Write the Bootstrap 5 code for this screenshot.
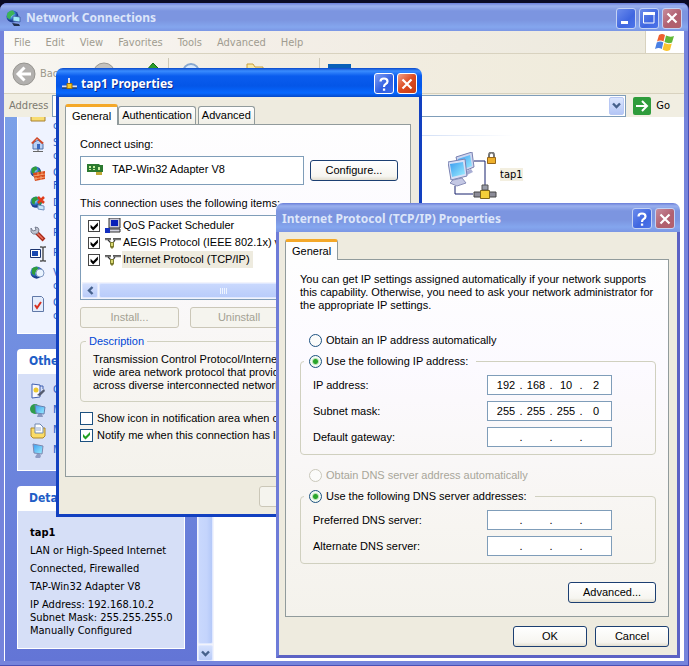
<!DOCTYPE html>
<html lang="en">
<head>
<meta charset="utf-8">
<meta name="viewport" content="width=device-width, initial-scale=1">
<title>Network Connections</title>
<link href="https://cdn.jsdelivr.net/npm/bootstrap@5.3.0/dist/css/bootstrap.min.css" rel="stylesheet">
<style>
:root{--dlg:"Liberation Sans",Arial,sans-serif;--ui:"DejaVu Sans Condensed","DejaVu Sans",sans-serif;--cap:"Noto Sans","Open Sans",sans-serif}
html,body{height:100%}
body{background:#0a0a24;font:11px/13px var(--ui);color:#000;overflow:hidden;position:relative}
p{margin:0}
button,input{font:inherit;color:inherit}
svg{display:block;flex:none}
a{color:#215dc6;text-decoration:none}
.win{display:flex;flex-direction:column;border-radius:7px 7px 0 0;overflow:hidden}
.caption{height:28px;flex:none;padding:2px 6px 0;font:bold 12px/18px var(--cap);color:#d8e4f8}
.win-main{height:calc(100% - 3px);margin-top:3px;background:#7584dc;border-right:1px solid #4a50b4;border-bottom:1px solid #4a50b4}
.idle .caption{background:linear-gradient(#6a7ed8 0,#9ab0ee 3px,#7c95e0 8px,#7c95e0 17px,#84a6ee 24px,#7b96e4)}
.idle .caption{color:#dce6fa}
.main-inner{flex:1;min-height:0;margin:0 4px 4px;background:#f3f0e8;display:flex;flex-direction:column}
.cbtns{display:flex;gap:3px}
.cbtn{width:20px;height:21px;padding:0;border:1px solid #fff;border-radius:3px;background:linear-gradient(135deg,#7c9cf4,#2f5de0 60%,#3c6cec);display:flex;align-items:center;justify-content:center}
.cbtn-x{background:linear-gradient(135deg,#f0a088,#dc4a20 50%,#c83c14)}
.idle .cbtn{border-color:#c4d2f4;background:linear-gradient(135deg,#6c8cec,#3f66e0 60%,#4c74ea)}
.idle .cbtn-x{background:linear-gradient(135deg,#c88c9c,#b06070 55%,#b4606c)}
.menubar{height:23px;flex:none;background:linear-gradient(90deg,#fbfaf8,#f4efe8 35%,#ece9dc);border-bottom:1px solid #d8d2bf}
.menus{gap:15px;padding-left:10px}
.menubar a{color:#a09c90}
.logo-cell{width:39px;background:#fff;border-left:1px solid #d8d2bf}
.toolbar{height:40px;flex:none;background:linear-gradient(90deg,#f8f6f2,#f3eee4 35%,#efebda);border-bottom:1px solid #d8d2bf;color:#9c988c}
.toolbar button{border:0;background:none;padding:0}
.vsep{width:1px;height:32px;background:#cdc8b6}
.address{height:23px;flex:none;background:#f1eee2;color:#7d7a70;padding-left:5px}
.addr-box{border:1px solid #7f9db9;background:#fff;height:22px;padding:1px}
.addr-box input{border:0;min-width:0;outline:0;background:none}
.drop{width:15px;border:1px solid #b8c8f4;border-radius:2px;background:linear-gradient(#dce6fe,#b4c6f6);padding:0;display:flex;align-items:center;justify-content:center}
.go{border:0;background:none;padding:0 14px 0 7px;gap:5px;color:#000}
.pane{width:193px;flex:none;background:linear-gradient(#7ba0e8,#6375d6);border-left:1px solid #fff;display:flex;flex-direction:column;justify-content:flex-end;gap:15px;padding:0 12px 12px;overflow:hidden}
.task{flex:none;color:#000}
.task h2{height:25px;margin:0;padding:0 12px;border-radius:4px 4px 0 0;background:linear-gradient(90deg,#fff 35%,#c6d3f7);font:bold 12px/25px var(--ui);color:#215dc6}
.task-in{background:#d6dff7;border:1px solid #fff;border-top:0;padding:9px 6px 11px 12px}
.task ul{list-style:none;margin:0;padding:0;display:flex;flex-direction:column;gap:4px}
.task li{display:flex;gap:7px;min-height:16px;align-items:flex-start}
.task-top .task-in{background:#eff3ff}
.task-info{display:flex;flex-direction:column;gap:5px;padding-top:15px;white-space:nowrap}
.vscroll{width:17px;flex:none;background:#f2f3fb;display:flex;flex-direction:column;gap:1px;padding:0 1px}
.thumb{background:linear-gradient(90deg,#c9d8fd,#c4d4fc 60%,#b4c8f8);border:1px solid #dfe8ff;border-radius:2px}
.sbtn{height:16px;border:1px solid #dfe8ff;border-radius:2px;background:linear-gradient(#d4e0fd,#b9cbf8);padding:0;display:flex;align-items:center;justify-content:center}
.files{flex:1;background:#fff;padding:18px 0 0}
.rule{height:1px;width:300px;background:linear-gradient(90deg,#7098e0,#fff)}
.file{margin:16px 0 0 234px;display:flex;align-items:center;gap:3px;color:#000}
.file span{background:#f3efe0;margin-bottom:5px}
.dlg{position:absolute;font:11px/13px var(--dlg)}
.dlg .caption{height:29px;padding-right:5px}
.dlg-body{background:#eeebdf;border:3px solid #1240c0;border-top:0;padding:7px 8px 7px 6px}
.dlg-a{left:56px;top:68px;width:366px}
.dlg-a .caption{color:#fff;text-shadow:1px 1px #0a2a90;background:linear-gradient(#0a48c8 0,#3a8cff 3px,#0a5cee 8px,#0456e8 18px,#0668ff 25px,#0448c8)}
.dlg-b{left:276px;top:203px;width:404px}
.dlg-b .dlg-body{border-color:#6e7cd8 #5c62c4 #5c62c4 #6e7cd8;padding-bottom:8px}
.tabs{display:flex;align-items:flex-end;height:20px}
.tabs button{border:1px solid #919b9c;border-bottom:0;border-radius:3px 3px 0 0;background:linear-gradient(#fff,#f0efe6);padding:0 3px;height:18px;margin-right:2px}
.tabs .on{height:21px;margin:0 0 -1px;padding:0 6px;border-top:3px solid #f4a828;background:#fdfdfc;position:relative;z-index:1;line-height:14px}
.page{border:1px solid #919b9c;background:linear-gradient(#fefefe,#fcfaff 30%,#f7f5f1 75%,#f4f2ec);padding:13px 12px 13px 14px;display:flex;flex-direction:column}
.page-a{padding-bottom:32px}
.s1{margin-top:5px}
.s2{margin-top:7px}
.s3{margin-top:12px}
.s4{margin-top:20px}
.s5{margin-top:18px}
.xbtn{height:21px;border:1px solid #1c3f72;border-radius:3px;background:linear-gradient(#fff,#f6f5f0 80%,#e2ded0);padding:0;min-width:74px}
.xbtn-l{min-width:88px}
.xbtn-w{width:99px}
.xbtn:disabled{border-color:#cbc7b8;background:#f5f4ee;color:#a3a193}
.btnbar{margin-top:9px}
.field{border:1px solid #7f9db9;background:#fff}
.adapter{height:29px;width:224px;padding:0 6px 3px}
.items{height:85px;padding:1px 1px 0}
.irow{height:17px;padding-left:6px;display:flex;align-items:center;gap:5px}
.irow label{display:flex;align-items:center;gap:1px}
.irow label span{padding:2px 3px 2px 1px}
.irow .sel{background:#eeebdf}
.form-check-input.tick{float:none;margin:0;width:13px;height:13px;border:1px solid #1c5180;border-radius:0;background-color:#fff;background-size:11px 11px;flex:none;opacity:1;box-shadow:none}
.form-check-input.tick:checked{background-color:#fff;border-color:#1c5180;background-image:url("data:image/svg+xml,%3Csvg xmlns='http://www.w3.org/2000/svg' viewBox='0 0 11 11'%3E%3Cpath d='M2 4v3l2.500 2.500L9 5V2L4.500 6.500z' fill='%2321a121'/%3E%3C/svg%3E")}
.irow .form-check-input.tick{width:12px;height:12px;border-color:#444}
.irow .form-check-input.tick:checked{border-color:#444;background-image:url("data:image/svg+xml,%3Csvg xmlns='http://www.w3.org/2000/svg' viewBox='0 0 11 11'%3E%3Cpath d='M2 4v3l2.500 2.500L9 5V2L4.500 6.500z' fill='%23000'/%3E%3C/svg%3E")}
.form-check-input.dot{float:none;margin:0;width:13px;height:13px;border:1px solid #1c5180;background-color:#fbfbfa;flex:none;box-shadow:none}
.form-check-input.dot:checked{background-color:#f4fbf2;border-color:#1c5180;background-image:radial-gradient(circle,#2aa52a 0,#2aa52a 2px,#b8e4b4 3px,transparent 4px)}
.form-check-input.dot:disabled{border-color:#cac8bb;opacity:1}
.form-check-input.dot:disabled~label{color:#a8a69a;opacity:1}
.orow{display:flex;align-items:center;gap:4px;height:17px}
.oradio{padding-left:9px}
.hscroll{height:17px;display:flex;gap:1px;background:#f2f3fb;padding:1px 0}
.hscroll .sbtn{width:16px;height:15px}
.hscroll .thumb{flex:1;background:linear-gradient(#c9d8fd,#b9ccfa)}
.grp{border:1px solid #d0d0bf;border-radius:4px;margin:0;padding:0 12px 7px;min-width:0}
.grp legend{float:none;width:auto;font:inherit;line-height:13px}
.grp .desc{color:#0046d5;margin:0 0 5px -7px;padding:0 3px}
.grp-a{margin:7px 0 8px;padding-bottom:9px}
.iprow{display:flex;align-items:center;justify-content:space-between;margin-bottom:6px}
.iprow:last-child{margin-bottom:0}
.ip{display:flex;width:125px;height:20px;padding-left:5px;align-items:center;margin-right:31px}
.ip input{width:26px;border:0;padding:0;text-align:center;background:none;outline:0}
.ip i{width:4px;font-style:normal;text-align:center}
.nw{white-space:nowrap}
.tcp{margin-top:4px}
.tcp legend{margin:0 0 5px -9px;padding:0 8px 0 5px}
</style>
<script src="https://cdn.jsdelivr.net/npm/bootstrap@5.3.0/dist/js/bootstrap.bundle.min.js"></script>
</head>
<body>
<svg width="0" height="0" class="position-absolute" aria-hidden="true">
<defs>
<linearGradient id="scr" x1="0" y1="0" x2="1" y2="1"><stop offset="0" stop-color="#3c9cf0"/><stop offset="1" stop-color="#9ef0ff"/></linearGradient>
<radialGradient id="globe" cx=".4" cy=".35"><stop offset="0" stop-color="#bfeaff"/><stop offset=".6" stop-color="#3a86d8"/><stop offset="1" stop-color="#1c3f90"/></radialGradient>
<symbol id="i-globe" viewBox="0 0 16 16"><circle cx="7" cy="7" r="6.500" fill="url(#globe)"/><path d="M2 3q3-3 6-2l1 3-3 2-1 4-3-2zM10 6l3-1v4l-3 2z" fill="#2e9c3c"/></symbol>
<symbol id="i-pc" viewBox="0 0 16 16"><path d="M3 1l10 2-1 8-8-1z" fill="url(#scr)" stroke="#7d88b0"/><path d="M7 11h3l1 2-1 2H6l-1-1z" fill="#8f9cc4"/></symbol>
<symbol id="i-wire" viewBox="0 0 16 16"><path d="M0 4.500h6M8 4.500h8" stroke="#777" stroke-width="1.500"/><path d="M0 3.500h6M8 3.500h8" stroke="#222" stroke-width=".7"/><path d="M3 5l3 3M10 5L8 8" stroke="#333" fill="none" stroke-width="1.200"/><path d="M5 7h4v5l-2 2-2-2z" fill="#7c7c30"/><path d="M6 8h2v3H6z" fill="#d8d870"/></symbol>
<symbol id="i-x" viewBox="0 0 12 12"><path d="M1.500 1.500l9 9m0-9l-9 9" stroke="#fff" stroke-width="2.200"/></symbol>
<symbol id="i-q" viewBox="0 0 12 14"><path d="M2.500 4.500q0-3 3.500-3t3.500 3q0 1.500-1.800 2.500T6 10" fill="none" stroke="#fff" stroke-width="2.200"/><path d="M4.900 11.500h2.300v2.200H4.900z" fill="#fff"/></symbol>
<symbol id="i-down" viewBox="0 0 9 7"><path d="M1 1.500l3.500 3.500L8 1.500" fill="none" stroke="#46618c" stroke-width="2.400"/></symbol>
</defs>
</svg>

<main class="win win-main idle">
  <header class="caption d-flex align-items-center justify-content-between">
    <div class="d-flex align-items-center gap-1">
      <svg width="16" height="17" viewBox="0 0 16 17"><circle cx="6.500" cy="6.500" r="6" fill="url(#globe)"/><path d="M1 4q2-4 6-3.500l2 3-4 3-1 3-3-2z" fill="#3cb458"/><path d="M7 6l7 1v5l-7-1z" fill="#9fe8f8" stroke="#38589c" stroke-width=".8"/><path d="M6 13l7 1 1 2H8z" fill="#20304c"/></svg>
      <span>Network Connections</span>
    </div>
    <div class="cbtns">
      <button class="cbtn" aria-label="Minimize"><svg width="12" height="12"><path d="M1 9h7v3H1z" fill="#fff"/></svg></button>
      <button class="cbtn" aria-label="Maximize"><svg width="12" height="12"><path d="M.500 2h10.500v9H.500z" fill="none" stroke="#fff"/><path d="M0 0h12v3H0z" fill="#fff"/></svg></button>
      <button class="cbtn cbtn-x" aria-label="Close"><svg width="12" height="12"><use href="#i-x"/></svg></button>
    </div>
  </header>
  <div class="main-inner">
    <nav class="menubar d-flex justify-content-between">
      <div class="menus d-flex align-items-center">
        <a href="#">File</a><a href="#">Edit</a><a href="#">View</a><a href="#">Favorites</a><a href="#">Tools</a><a href="#">Advanced</a><a href="#">Help</a>
      </div>
      <div class="logo-cell d-flex align-items-center justify-content-center">
        <svg width="20" height="19" viewBox="0 0 20 19"><path d="M4 2q3-2 6 0L8.500 8.500q-3-2-6.500 0z" fill="#ee6030"/><path d="M11 2.500q4 2 8 .500l-2 6.500q-3.500 1.500-7.500-.500z" fill="#62b838"/><path d="M1.800 9.500q3.500-2 6.500 0L6.800 16q-3-2-6.800 0z" fill="#4a80e4"/><path d="M9.300 10q4 2 7.500.500L15 17q-4 2-7.400-.500z" fill="#fac430"/></svg>
      </div>
    </nav>
    <div class="toolbar d-flex align-items-center">
      <button class="d-flex align-items-center gap-1 ms-2"><svg width="24" height="24" viewBox="0 0 24 24"><circle cx="12" cy="12" r="11" fill="#b2b0ae" stroke="#96948f"/><path d="M12.500 5.500L6 12l6.500 6.500M6.500 12H19" stroke="#fff" stroke-width="3" fill="none"/></svg>Back</button>
      <button class="ms-4 ps-1" aria-label="Forward"><svg width="24" height="24"><circle cx="12" cy="12" r="11" fill="#c4c2be" stroke="#9a9892"/></svg></button>
      <button class="ms-4" aria-label="Up"><svg width="24" height="24" viewBox="0 0 24 24"><path d="M2 7h8l2 2h11v13H2z" fill="#f4d870"/><path d="M4 11l9-10 7 7-5 1v8H9v-7z" fill="#2c9c2c" stroke="#127012"/></svg></button>
      <span class="vsep ms-1"></span>
      <button class="d-flex align-items-center gap-1 ms-2" aria-label="Search"><svg width="28" height="24"><circle cx="14" cy="10" r="8" fill="#dbe9f8" stroke="#88a8d0" stroke-width="2"/></svg>Search</button>
      <button class="d-flex align-items-center gap-1" aria-label="Folders"><svg width="28" height="24"><path d="M4 2h6l2 3h8v16H4z" fill="#f9e9a4" stroke="#c8a040"/></svg>Folders</button>
      <span class="vsep ms-2"></span>
      <button class="ms-2" aria-label="Views"><svg width="24" height="20"><path d="M0 0h23v20H0z" fill="#0860b8"/></svg></button>
    </div>
    <div class="address d-flex align-items-center">
      <label for="addr" class="pe-1">Address</label>
      <div class="addr-box d-flex flex-fill">
        <input id="addr" type="text" class="flex-fill">
        <button class="drop" aria-label="Show addresses"><svg width="9" height="7"><use href="#i-down"/></svg></button>
      </div>
      <button class="go d-flex align-items-center"><svg width="18" height="18" viewBox="0 0 18 18"><rect width="18" height="18" rx="2" fill="#2f9c3c"/><path d="M9 4l5 5-5 5M3 9h10" stroke="#fff" stroke-width="2" fill="none"/></svg>Go</button>
    </div>
    <div class="d-flex flex-fill overflow-hidden">
      <aside class="pane">
        <section class="task task-top">
          <h2>Network Tasks</h2>
          <div class="task-in"><ul>
            <li><svg width="16" height="16"><path d="M1 3h6l1 2h7v10H1z" fill="#f8dc70" stroke="#a88030"/><path d="M5 6h6v5H5z" fill="#fff8d0"/></svg><a href="#">Create a new<br>connection</a></li>
            <li><svg width="16" height="16" viewBox="0 0 16 16"><path d="M3 7l5-3 5 4v5H3z" fill="#b8d0f4" stroke="#5070a8"/><path d="M1 7l6-6 7 6-2 1-5-5-4 5z" fill="#d04828"/><path d="M7 8h3v5H7z" fill="#3868c0"/><path d="M8 13v2M3 15.500h10" stroke="#666"/></svg><a href="#">Set up a home or small office network</a></li>
            <li><svg width="16" height="16" viewBox="0 0 16 16"><use href="#i-globe" width="13" height="13"/><path d="M3 7l12-2v8L5 15z" fill="#d84c1c"/><path d="M3 10l12-2M4 13l11-2M8 6v4m4-5v4m-6 2v3m5-4v4" stroke="#f8b080" stroke-width=".8"/></svg><a href="#">Change Windows Firewall settings</a></li>
            <li><svg width="16" height="16" viewBox="0 0 16 16"><use href="#i-globe" width="14" height="14"/><path d="M8 1l6 6m0-6L8 7" stroke="#e03c1c" stroke-width="2.500"/><path d="M8 9l6 1v4l-6-1z" fill="#c8e8fc" stroke="#7090c0"/></svg><a href="#">Disable this network device</a></li>
            <li><svg width="16" height="16" viewBox="0 0 16 16"><path d="M6 6l8 8" stroke="#a82818" stroke-width="4"/><path d="M6 6l7 7" stroke="#ee7460" stroke-width="1.500"/><path d="M1 2l2 3 3-1-1-3q4 0 4 3t-3 4-5-2z" fill="#c0c4d0" stroke="#666c80" stroke-width=".8"/></svg><a href="#" class="nw">Repair this connection</a></li>
            <li><svg width="16" height="16" viewBox="0 0 16 16"><path d="M.500 3.500h10v8H.500z" fill="#fff" stroke="#1c3470"/><path d="M2 5h6v5H2z" fill="#1848b0"/><path d="M10 1h2l1 1 1-1h2M13 2v12M10 15h2l1-1 1 1h2" stroke="#555" fill="none" stroke-width="1.500"/></svg><a href="#" class="nw">Rename this connection</a></li>
            <li><svg width="16" height="16" viewBox="0 0 16 16"><use href="#i-globe" width="15" height="15"/><circle cx="10" cy="7" r="4" fill="#eaf4ff" stroke="#8098c0"/></svg><a href="#">View status of this connection</a></li>
            <li><svg width="16" height="16" viewBox="0 0 16 16"><path d="M2.500.500h9l2 2v13h-11z" fill="#e4ecfc" stroke="#6078a8"/><path d="M5 9l2 3 4-6" stroke="#d83020" stroke-width="2" fill="none"/></svg><a href="#">Change settings of this connection</a></li>
          </ul></div>
        </section>
        <section class="task">
          <h2>Other Places</h2>
          <div class="task-in"><ul>
            <li><svg width="16" height="16" viewBox="0 0 16 16"><path d="M2 1l8 1v12l-8 1z" fill="#f8f8ff" stroke="#4060b0"/><path d="M10 3h3v3" stroke="#4060b0" fill="none"/><circle cx="6" cy="7" r="2.500" fill="#ecc830"/><path d="M7 12l7-6 1 2-5 5z" fill="#555c70"/></svg><a href="#">Control Panel</a></li>
            <li><svg width="16" height="16" viewBox="0 0 16 16"><circle cx="5" cy="6" r="5" fill="#2e9c4c"/><path d="M5 2l10 2-1 7-8-1z" fill="url(#scr)" stroke="#6880b0"/><path d="M8 11h4l1 3H7z" fill="#8898c0"/></svg><a href="#">My Network Places</a></li>
            <li><svg width="16" height="16" viewBox="0 0 16 16"><path d="M1 5h14v8l-2 2H3l-2-2z" fill="#fadc68" stroke="#b08828"/><path d="M5 1h5l3 3v6H5z" fill="#fff" stroke="#7088b0"/><path d="M6 5h5M6 7h5" stroke="#90a8d0"/></svg><a href="#">My Documents</a></li>
            <li><svg width="16" height="16"><use href="#i-pc"/></svg><a href="#">My Computer</a></li>
          </ul></div>
        </section>
        <section class="task">
          <h2>Details</h2>
          <div class="task-in task-info">
            <p><b>tap1</b></p><p>LAN or High-Speed Internet</p><p>Connected, Firewalled</p><p>TAP-Win32 Adapter V8</p>
            <p>IP Address: 192.168.10.2<br>Subnet Mask: 255.255.255.0<br>Manually Configured</p>
          </div>
        </section>
      </aside>
      <div class="vscroll"><div class="thumb flex-fill"></div><button class="sbtn" aria-label="Scroll down"><svg width="9" height="7"><use href="#i-down"/></svg></button></div>
      <section class="files">
        <div class="rule"></div>
        <div class="file">
          <svg width="49" height="50" viewBox="0 0 49 50"><path d="M26 9h11v24M7 34v8h18" stroke="#16206c" fill="none"/><path d="M8 5l16-5 2 15-14 6z" fill="#cfd6f0" stroke="#7880b0"/><path d="M10 7l12-4 2 11-12 4z" fill="url(#scr)"/><path d="M14 21l9-4 2 3-8 4z" fill="#a8aed4"/><path d="M0 10l17-3 2 17-16 4z" fill="#d8dff6" stroke="#7880b0"/><path d="M2 12l13-2 2 12-13 3z" fill="url(#scr)"/><path d="M5 28l9-2 4 5-9 3-7-3z" fill="#c4c8e4" stroke="#888eb8"/><path d="M41 5V3q0-2.500 2.500-2.500T46 3v3" stroke="#777" stroke-width="2" fill="none"/><path d="M39.500 5.500h8v6h-8z" fill="#eeb02c" stroke="#96661a"/><path d="M26 40h22v5H26z" fill="#8c8c98" stroke="#444"/><path d="M34 33h6v5h-6z" fill="#989ca8" stroke="#555"/><path d="M32.500 38.500h9v8h-9z" fill="#f4d038" stroke="#806818"/></svg>
          <span>tap1</span>
        </div>
      </section>
    </div>
  </div>
</main>

<section class="win dlg dlg-a" role="dialog" aria-label="tap1 Properties">
  <header class="caption d-flex align-items-center justify-content-between">
    <div class="d-flex align-items-center gap-1">
      <svg width="15" height="14"><path d="M7 1v6M0 9.500h15" stroke="#dde" stroke-width="2"/><path d="M0 11h15" stroke="#333"/><path d="M5 6.500h5v5H5z" fill="#f8c828" stroke="#946c10"/></svg>
      <span>tap1 Properties</span>
    </div>
    <div class="cbtns">
      <button class="cbtn" aria-label="Help"><svg width="12" height="14"><use href="#i-q"/></svg></button>
      <button class="cbtn cbtn-x" aria-label="Close"><svg width="12" height="12"><use href="#i-x"/></svg></button>
    </div>
  </header>
  <div class="dlg-body">
    <div class="tabs" role="tablist"><button class="on" role="tab">General</button><button role="tab">Authentication</button><button role="tab">Advanced</button></div>
    <div class="page page-a">
      <p>Connect using:</p>
      <div class="d-flex align-items-center justify-content-between s1">
        <div class="field adapter d-flex align-items-center gap-2">
          <svg width="17" height="13" viewBox="0 0 17 13"><path d="M0 1h12l1 1h3v7h-3v2H9V9H0z" fill="#2c7a30"/><path d="M2 3h2v2H2zm4 0h2v2H6zM2 6h2v1H2zm4 0h2v1H6zm5-2h2v3h-2z" fill="#c8f0a0"/><path d="M9 9h6v3H9z" fill="#c0a838"/></svg>
          <span>TAP-Win32 Adapter V8</span>
        </div>
        <button class="xbtn xbtn-l">Configure...</button>
      </div>
      <p class="s3">This connection uses the following items:</p>
      <div class="field items d-flex flex-column s1">
        <div class="irow"><input class="form-check-input tick" type="checkbox" id="it1" checked><label for="it1"><svg width="16" height="16" viewBox="0 0 16 16"><path d="M4 0h11v10H4z" fill="#c8c8d8" stroke="#333"/><path d="M6 2h7v6H6z" fill="#0820b8"/><path d="M3 11h12v3H3z" fill="#d4d4e0" stroke="#333"/><path d="M0 10h5v5H0z" fill="#1430c0"/></svg><span>QoS Packet Scheduler</span></label></div>
        <div class="irow"><input class="form-check-input tick" type="checkbox" id="it2" checked><label for="it2"><svg width="16" height="16"><use href="#i-wire"/></svg><span class="nw">AEGIS Protocol (IEEE 802.1x) v3.0.0.9</span></label></div>
        <div class="irow"><input class="form-check-input tick" type="checkbox" id="it3" checked><label for="it3"><svg width="16" height="16"><use href="#i-wire"/></svg><span class="sel">Internet Protocol (TCP/IP)</span></label></div>
        <div class="hscroll mt-auto"><button class="sbtn" aria-label="Scroll left"><svg width="7" height="9"><path d="M5.500 1L2 4.500 5.500 8" fill="none" stroke="#46618c" stroke-width="2.400"/></svg></button><div class="thumb d-flex align-items-center ps-5"><svg class="ms-5" width="34" height="6"><path d="M24.500 0v6m2-6v6m2-6v6m2-6v6" stroke="#eef4ff"/></svg></div><button class="sbtn" aria-label="Scroll right"></button></div>
      </div>
      <div class="d-flex justify-content-between s2">
        <button class="xbtn xbtn-w" disabled>Install...</button><button class="xbtn xbtn-w" disabled>Uninstall</button><button class="xbtn xbtn-w" disabled>Properties</button>
      </div>
      <fieldset class="grp grp-a">
        <legend class="desc">Description</legend>
        <p class="nw">Transmission Control Protocol/Internet Protocol. The<br>wide area network protocol that provides<br>across diverse interconnected networks.</p>
      </fieldset>
      <div class="orow"><input class="form-check-input tick" type="checkbox" id="o1"><label for="o1" class="nw">Show icon in notification area when connected</label></div>
      <div class="orow"><input class="form-check-input tick" type="checkbox" id="o2" checked><label for="o2" class="nw">Notify me when this connection has limited or no</label></div>
    </div>
    <div class="btnbar d-flex justify-content-end gap-1"><button class="xbtn" disabled>OK</button><button class="xbtn">Cancel</button></div>
  </div>
</section>

<section class="win dlg dlg-b idle" role="dialog" aria-label="Internet Protocol (TCP/IP) Properties">
  <header class="caption d-flex align-items-center justify-content-between">
    <span>Internet Protocol (TCP/IP) Properties</span>
    <div class="cbtns">
      <button class="cbtn" aria-label="Help"><svg width="12" height="14"><use href="#i-q"/></svg></button>
      <button class="cbtn cbtn-x" aria-label="Close"><svg width="12" height="12"><use href="#i-x"/></svg></button>
    </div>
  </header>
  <div class="dlg-body">
    <div class="tabs" role="tablist"><button class="on" role="tab">General</button></div>
    <div class="page">
      <p class="nw">You can get IP settings assigned automatically if your network supports<br>this capability. Otherwise, you need to ask your network administrator for<br>the appropriate IP settings.</p>
      <div class="orow oradio s4"><input class="form-check-input dot" type="radio" name="ip" id="ipa"><label for="ipa">Obtain an IP address automatically</label></div>
      <fieldset class="grp tcp">
        <legend class="orow"><input class="form-check-input dot" type="radio" name="ip" id="ipb" checked><label for="ipb">Use the following IP address:</label></legend>
        <div class="iprow"><span>IP address:</span><div class="field ip" role="group" aria-label="IP address"><input aria-label="Octet 1" value="192"><i>.</i><input aria-label="Octet 2" value="168"><i>.</i><input aria-label="Octet 3" value="10"><i>.</i><input aria-label="Octet 4" value="2"></div></div>
        <div class="iprow"><span>Subnet mask:</span><div class="field ip" role="group" aria-label="Subnet mask"><input aria-label="Octet 1" value="255"><i>.</i><input aria-label="Octet 2" value="255"><i>.</i><input aria-label="Octet 3" value="255"><i>.</i><input aria-label="Octet 4" value="0"></div></div>
        <div class="iprow"><span>Default gateway:</span><div class="field ip" role="group" aria-label="Default gateway"><input aria-label="Octet 1"><i>.</i><input aria-label="Octet 2"><i>.</i><input aria-label="Octet 3"><i>.</i><input aria-label="Octet 4"></div></div>
      </fieldset>
      <div class="orow oradio s3"><input class="form-check-input dot" type="radio" name="dns" id="da" disabled><label for="da">Obtain DNS server address automatically</label></div>
      <fieldset class="grp tcp">
        <legend class="orow"><input class="form-check-input dot" type="radio" name="dns" id="db" checked><label for="db">Use the following DNS server addresses:</label></legend>
        <div class="iprow"><span>Preferred DNS server:</span><div class="field ip" role="group" aria-label="Preferred DNS server"><input aria-label="Octet 1"><i>.</i><input aria-label="Octet 2"><i>.</i><input aria-label="Octet 3"><i>.</i><input aria-label="Octet 4"></div></div>
        <div class="iprow"><span>Alternate DNS server:</span><div class="field ip" role="group" aria-label="Alternate DNS server"><input aria-label="Octet 1"><i>.</i><input aria-label="Octet 2"><i>.</i><input aria-label="Octet 3"><i>.</i><input aria-label="Octet 4"></div></div>
      </fieldset>
      <button class="xbtn xbtn-l align-self-end s5">Advanced...</button>
    </div>
    <div class="btnbar d-flex justify-content-end gap-2"><button class="xbtn">OK</button><button class="xbtn">Cancel</button></div>
  </div>
</section>
</body>
</html>
